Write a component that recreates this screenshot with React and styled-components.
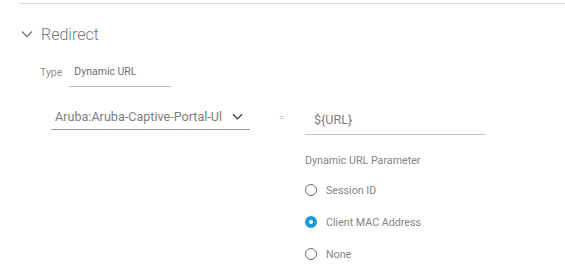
import React from 'react';
import styled, { createGlobalStyle } from 'styled-components';

const GlobalStyle = createGlobalStyle`
  body {
    margin: 0;
    background: #fff;
    font-family: Roboto, "Liberation Sans", sans-serif;
  }
`;

const Page = styled.div`
  padding: 3px 0 0 19px;
`;

const Section = styled.div`
  border-top: 1px solid #dcdcdc;
`;

const Header = styled.div`
  display: flex;
  align-items: center;
  gap: 8px;
  height: 20px;
  margin-top: 20px;
  padding-left: 2px;
  color: #777;
  font-size: 16px;
  font-weight: 300;
`;

const Body = styled.div`
  padding-left: 21px;
`;

const TypeRow = styled.div`
  display: flex;
  align-items: center;
  margin-top: 13px;
  gap: 7px;
`;

const Label = styled.span`
  font-size: 10.5px;
  color: #8e8e8e;
`;

const TypeField = styled.div`
  display: flex;
  align-items: center;
  width: 102px;
  height: 30px;
  box-sizing: border-box;
  border-bottom: 1px solid #bdbdbd;
  padding-left: 5px;
  font-size: 10.5px;
  color: #707070;
`;

const MapRow = styled.div`
  display: flex;
  align-items: flex-start;
  margin-top: 17px;
  padding-left: 11px;
`;

const Select = styled.div`
  display: flex;
  align-items: center;
  justify-content: space-between;
  width: 199px;
  height: 24px;
  margin-top: 2px;
  box-sizing: border-box;
  border-bottom: 1px solid #9a9a9a;
  padding: 0 7px 2px 4px;
  font-size: 12.6px;
  color: #7e7e7e;
`;

const Equals = styled.span`
  width: 26px;
  margin-left: 29px;
  padding-top: 9px;
  font-size: 9px;
  color: #aaa;
`;

const Column = styled.div`
  display: flex;
  flex-direction: column;
`;

const Input = styled.div`
  display: flex;
  align-items: center;
  width: 180px;
  height: 31px;
  box-sizing: border-box;
  border-bottom: 1px solid #c4c4c4;
  padding-left: 9px;
  font-size: 12.6px;
  color: #7e7e7e;
`;

const Caption = styled.div`
  margin-top: 19px;
  line-height: 14px;
  font-size: 10.7px;
  color: #858585;
`;

const RadioList = styled.div`
  margin-top: 6px;
`;

const RadioRow = styled.div`
  display: flex;
  align-items: center;
  gap: 9px;
  height: 32px;
  font-size: 10.7px;
  color: #858585;
`;

const Dot = styled.span`
  width: 12px;
  height: 12px;
  box-sizing: border-box;
  border-radius: 50%;
  border: ${(p) => (p.$on ? '4px solid #1a9ad6' : '1.5px solid #6e6e6e')};
  background: #fff;
`;

const Chevron = ({ size = 12, color = '#777' }) => (
  <svg width={size} height={size} viewBox="0 0 12 12" fill="none">
    <path d="M1 3.5 L6 8.5 L11 3.5" stroke={color} strokeWidth="1.3" />
  </svg>
);

const options = ['Session ID', 'Client MAC Address', 'None'];

export default function App() {
  return (
    <Page>
      <GlobalStyle />
      <Section>
        <Header>
          <Chevron />
          <span>Redirect</span>
        </Header>
        <Body>
          <TypeRow>
            <Label>Type</Label>
            <TypeField>Dynamic URL</TypeField>
          </TypeRow>
          <MapRow>
            <Select>
              <span>Aruba:Aruba-Captive-Portal-Ul</span>
              <Chevron size={11} color="#444" />
            </Select>
            <Equals>=</Equals>
            <Column>
              <Input>{'${URL}'}</Input>
              <Caption>Dynamic URL Parameter</Caption>
              <RadioList>
                {options.map((o, i) => (
                  <RadioRow key={o}>
                    <Dot $on={i === 1} />
                    <span>{o}</span>
                  </RadioRow>
                ))}
              </RadioList>
            </Column>
          </MapRow>
        </Body>
      </Section>
    </Page>
  );
}
